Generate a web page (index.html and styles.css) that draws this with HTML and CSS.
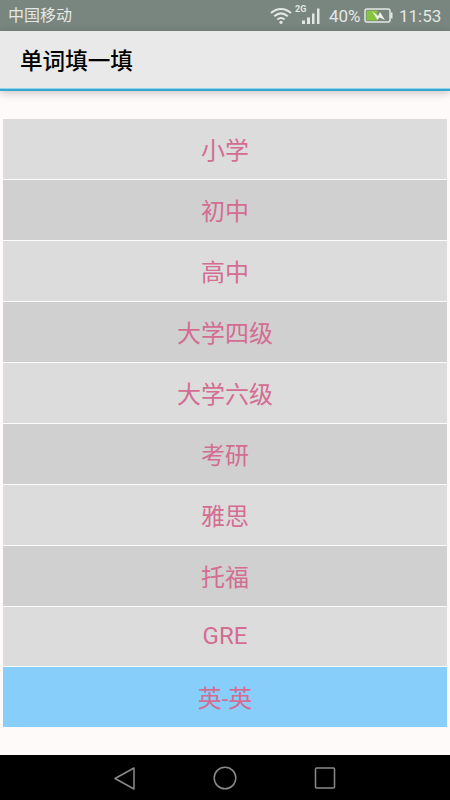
FILE: index.html
```html
<!DOCTYPE html>
<html lang="zh-CN">
<head>
  <meta charset="UTF-8" />
  <meta name="viewport" content="width=device-width, initial-scale=1.0" />
  <title>单词填一填</title>
  <link rel="stylesheet" href="styles.css">
</head>
<body>
  <div class="phone">
    <div class="status-bar">
      <span class="carrier">中国移动</span>
      <div class="status-right">
        <svg class="wifi" width="22" height="18" viewBox="0 0 22 18" fill="none" stroke="#e4e8e4" stroke-width="2">
          <path d="M1 6 C7 0.500 15 0.500 21 6" />
          <path d="M4.200 9.300 C8.500 5.600 13.500 5.600 17.800 9.300" />
          <path d="M7.400 12.500 C9.800 10.600 12.200 10.600 14.600 12.500" />
          <circle cx="11" cy="15.300" r="1.600" fill="#e4e8e4" stroke="none" />
        </svg>
        <div class="signal">
          <span class="net">2G</span>
          <svg width="26" height="18" viewBox="0 0 26 18" fill="#e4e8e4">
            <rect x="7" y="13.500" width="3" height="3.500" />
            <rect x="12" y="10.500" width="3" height="6.500" />
            <rect x="17" y="6.500" width="2.500" height="10.500" />
            <rect x="22" y="1.500" width="2.500" height="15.500" />
          </svg>
        </div>
        <span class="battery-text">40%</span>
        <svg class="battery" width="29" height="15" viewBox="0 0 29 15">
          <rect x="1" y="1" width="25" height="13" rx="2" fill="none" stroke="#e4e8e4" stroke-width="1.500" />
          <rect x="2.500" y="2.500" width="11" height="10" fill="#86c440" />
          <rect x="26.500" y="4.500" width="2" height="6" fill="#e4e8e4" />
          <path d="M8 3 L14 8 L16 4 L21 12 L15.500 9.500 L13.500 12 Z" fill="#eef0ea" />
        </svg>
        <span class="clock">11:53</span>
      </div>
    </div>

    <header class="app-bar">
      <h1>单词填一填</h1>
    </header>

    <main class="content">
      <ul class="level-list">
        <li class="level-item">小学</li>
        <li class="level-item">初中</li>
        <li class="level-item">高中</li>
        <li class="level-item">大学四级</li>
        <li class="level-item">大学六级</li>
        <li class="level-item">考研</li>
        <li class="level-item">雅思</li>
        <li class="level-item">托福</li>
        <li class="level-item short">GRE</li>
        <li class="level-item selected">英-英</li>
      </ul>
    </main>

    <nav class="nav-bar">
      <svg width="24" height="24" viewBox="0 0 24 24" fill="none" stroke="#8a8a8a" stroke-width="1.500" stroke-linejoin="round">
        <path d="M21 2 L2 12.500 L21 23 Z" />
      </svg>
      <svg width="24" height="24" viewBox="0 0 24 24" fill="none" stroke="#8a8a8a" stroke-width="1.500">
        <circle cx="12" cy="12" r="10.800" />
      </svg>
      <svg width="24" height="24" viewBox="0 0 24 24" fill="none" stroke="#8a8a8a" stroke-width="1.500" stroke-linejoin="round">
        <rect x="2.500" y="2" width="19" height="20" rx="1" />
      </svg>
    </nav>
  </div>
</body>
</html>
```

FILE: styles.css
```css
* {
  box-sizing: border-box;
}
body {
  margin: 0;
  font-family: Roboto, "Noto Sans CJK SC", sans-serif;
}
.phone {
  width: 450px;
  height: 800px;
  display: flex;
  flex-direction: column;
  background-color: #fffafa;
}
.status-bar {
  height: 31px;
  padding: 0 8px;
  display: flex;
  align-items: center;
  justify-content: space-between;
  background-color: #79857f;
  color: #e4e8e4;
  font-size: 16px;
}
.status-right {
  display: flex;
  align-items: center;
  font-size: 17px;
}
.carrier {
  line-height: 31px;
}
.wifi {
  margin-right: 3px;
}
.signal {
  position: relative;
  width: 26px;
  height: 18px;
  display: flex;
}
.net {
  position: absolute;
  top: -3px;
  left: 0;
  font-size: 9px;
  font-weight: bold;
  line-height: 10px;
}
.battery-text {
  width: 32px;
  margin-left: 8px;
  white-space: nowrap;
}
.battery {
  margin-left: 3px;
}
.clock {
  width: 43px;
  margin-left: 6px;
  white-space: nowrap;
}
.app-bar {
  height: 60px;
  padding: 0 20px 2px;
  display: flex;
  align-items: center;
  background-color: #e9e9e9;
  border-bottom: 2px solid #3ba4cb;
  box-shadow: inset 0 -1px 0 #8ad8f0, 0 2px 8px rgba(0, 0, 0, 0.22);
}
.app-bar h1 {
  margin: 0;
  font-size: 22.600px;
  font-weight: 500;
  color: #000;
}
.content {
  flex: 1;
  padding: 28px 3px 0;
}
.level-list {
  margin: 0;
  padding: 0;
  list-style: none;
  display: flex;
  flex-direction: column;
  gap: 1px;
}
.level-item {
  height: 60px;
  padding-bottom: 1px;
  display: flex;
  align-items: center;
  justify-content: center;
  background-color: #dcdcdc;
  color: #d36d92;
  font-size: 24px;
}
.level-item:nth-child(even) {
  background-color: #d0d0d0;
}
.level-item.short {
  height: 59px;
}
.level-item.selected {
  height: 59.500px;
  background-color: #87cefa;
}
.nav-bar {
  height: 45px;
  padding: 0 113px;
  display: flex;
  align-items: center;
  justify-content: space-between;
  background-color: #000;
}
```
